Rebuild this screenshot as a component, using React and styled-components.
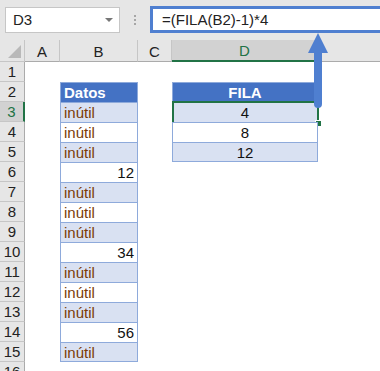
import React from 'react';
import styled, { createGlobalStyle } from 'styled-components';

const GlobalStyle = createGlobalStyle`
  body {
    margin: 0;
    background: #ffffff;
    font-family: "Liberation Sans", Arial, sans-serif;
  }
`;

const columns = ['A', 'B', 'C', 'D', ''];
const selectedCol = 'D';
const selectedRow = 3;

// column B contents, rows 2..15
const datos = [
    { text: 'Datos', head: true },
    { text: 'inútil' },
    { text: 'inútil' },
    { text: 'inútil' },
    { text: '12', num: true },
    { text: 'inútil' },
    { text: 'inútil' },
    { text: 'inútil' },
    { text: '34', num: true },
    { text: 'inútil' },
    { text: 'inútil' },
    { text: 'inútil' },
    { text: '56', num: true },
    { text: 'inútil' },
];

const fila = [
    { text: 'FILA', head: true },
    { text: '4' },
    { text: '8' },
    { text: '12' },
];

const App = () => {
    const rows = [];
    for (let r = 1; r <= 16; r++) rows.push(r);

    return (
        <Page>
            <GlobalStyle />
            <FormulaBar>
                <NameBox>
                    <span>D3</span>
                    <Caret />
                </NameBox>
                <Dots>
                    <i /><i /><i />
                </Dots>
                <FormulaInput>=(FILA(B2)-1)*4</FormulaInput>
            </FormulaBar>

            <Sheet>
                <Corner>
                    <CornerTriangle />
                </Corner>
                {columns.map((c, i) => (
                    <ColHeader key={i} $selected={c === selectedCol} $last={c === ''}>
                        {c}
                    </ColHeader>
                ))}

                {rows.map((r) => {
                    const b = datos[r - 2];
                    const d = fila[r - 2];
                    return (
                        <React.Fragment key={r}>
                            <RowHeader $selected={r === selectedRow}>{r}</RowHeader>
                            <Cell />
                            {b ? (
                                <TableCell
                                    $head={b.head}
                                    $band={!b.head && r % 2 === 1}
                                    $align={b.num ? 'right' : 'left'}
                                    $text={b.num ? '#111' : '#7a3b06'}
                                    $last={r === 15}
                                >
                                    {b.text}
                                </TableCell>
                            ) : (
                                <Cell />
                            )}
                            <Cell />
                            {d ? (
                                <TableCell
                                    $head={d.head}
                                    $band={!d.head && r % 2 === 1}
                                    $align="center"
                                    $text="#111"
                                    $last={r === 5}
                                >
                                    {d.text}
                                    {r === selectedRow && (
                                        <Selection>
                                            <FillHandle />
                                        </Selection>
                                    )}
                                </TableCell>
                            ) : (
                                <Cell />
                            )}
                            <Cell />
                        </React.Fragment>
                    );
                })}
            </Sheet>

            <Arrow width="24" height="80" viewBox="0 0 24 80">
                <path d="M12 2 L22 22 L16 22 L16 73 Q16 77 12 77 Q8 77 8 73 L8 22 L2 22 Z" fill="#4f7fd0" />
            </Arrow>
        </Page>
    );
};

const Page = styled.div`
  position: relative;
  width: 380px;
  height: 371px;
  overflow: hidden;
  background: #ffffff;
`;

const FormulaBar = styled.div`
  display: flex;
  align-items: center;
  height: 40px;
  padding: 0 0 0 5px;
  box-sizing: border-box;
  background: #e6e6e6;
`;

const NameBox = styled.div`
  display: flex;
  align-items: center;
  justify-content: space-between;
  width: 115px;
  height: 26px;
  margin-top: -1px;
  box-sizing: border-box;
  padding: 0 6px 0 7px;
  background: #ffffff;
  border: 1px solid #c6c6c6;
  font-size: 15px;
  color: #222;
`;

const Caret = styled.div`
  width: 0;
  height: 0;
  border-left: 4px solid transparent;
  border-right: 4px solid transparent;
  border-top: 4px solid #777;
`;

const Dots = styled.div`
  display: flex;
  flex-direction: column;
  gap: 2px;
  width: 30px;
  align-items: center;
  margin-top: -1px;

  i {
    width: 2px;
    height: 2px;
    background: #a6a6a6;
  }
`;

const FormulaInput = styled.div`
  flex: 1;
  height: 27px;
  margin-top: -1px;
  box-sizing: border-box;
  border: 3px solid #4f7fd0;
  border-right: none;
  background: #ffffff;
  padding-left: 9px;
  font-size: 15px;
  line-height: 21px;
  color: #222;
`;

const Sheet = styled.div`
  display: grid;
  grid-template-columns: 25px 35px 78px 34px 146px 62px;
  grid-template-rows: 22px repeat(16, 20px);
  font-size: 15px;
`;

const Corner = styled.div`
  position: relative;
  background: #e6e6e6;
  border-right: 1px solid #c6c6c6;
  border-bottom: 1px solid #c6c6c6;
`;

const CornerTriangle = styled.div`
  position: absolute;
  right: 3px;
  bottom: 3px;
  width: 0;
  height: 0;
  border-left: 13px solid transparent;
  border-bottom: 13px solid #b9b9b9;
`;

const ColHeader = styled.div`
  display: flex;
  align-items: center;
  justify-content: center;
  background: ${(p) => (p.$selected ? '#d2d2d2' : '#e6e6e6')};
  border-right: ${(p) => (p.$last ? 'none' : '1px solid #c6c6c6')};
  border-bottom: ${(p) => (p.$selected ? '2px solid #217346' : '1px solid #ababab')};
  color: ${(p) => (p.$selected ? '#217346' : '#222')};
  box-sizing: border-box;
  padding-top: 1px;
`;

const RowHeader = styled.div`
  display: flex;
  align-items: center;
  justify-content: center;
  background: ${(p) => (p.$selected ? '#d2d2d2' : '#e6e6e6')};
  border-right: ${(p) => (p.$selected ? '2px solid #217346' : '1px solid #ababab')};
  border-bottom: 1px solid #c6c6c6;
  color: ${(p) => (p.$selected ? '#217346' : '#222')};
  box-sizing: border-box;
`;

const Cell = styled.div`
  background: #ffffff;
`;

const TableCell = styled.div`
  position: relative;
  display: flex;
  align-items: center;
  justify-content: ${(p) => (p.$align === 'right' ? 'flex-end' : p.$align === 'center' ? 'center' : 'flex-start')};
  padding: 0 3px;
  box-sizing: border-box;
  background: ${(p) => (p.$head ? '#4472c4' : p.$band ? '#d9e1f2' : '#ffffff')};
  color: ${(p) => (p.$head ? '#ffffff' : p.$text)};
  font-weight: ${(p) => (p.$head ? 'bold' : 'normal')};
  border-left: 1px solid #8eaadb;
  border-right: 1px solid #8eaadb;
  border-top: 1px solid #8eaadb;
  border-bottom: ${(p) => (p.$last ? '1px solid #8eaadb' : 'none')};
`;

const Selection = styled.div`
  position: absolute;
  left: -1px;
  right: -2px;
  top: -2px;
  bottom: -2px;
  border: 2px solid #217346;
`;

const FillHandle = styled.div`
  position: absolute;
  right: -5px;
  bottom: -5px;
  width: 5px;
  height: 5px;
  background: #217346;
  border: 1px solid #ffffff;
`;

const Arrow = styled.svg`
  position: absolute;
  left: 306px;
  top: 31px;
`;

export default App;
